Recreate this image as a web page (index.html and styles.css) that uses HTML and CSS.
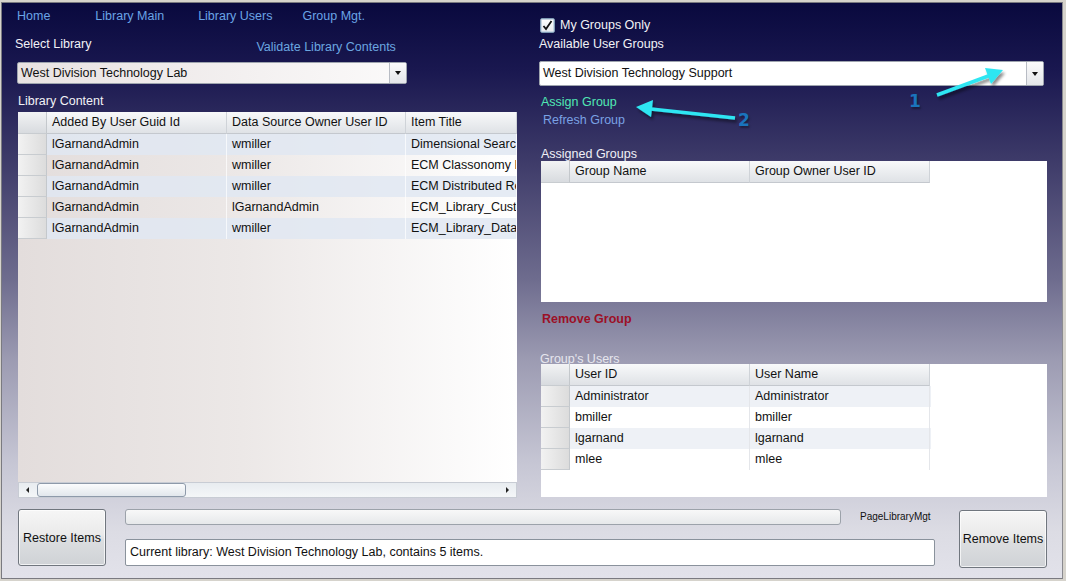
FILE: index.html
```html
<!DOCTYPE html>
<html>
<head>
<meta charset="utf-8">
<title>PageLibraryMgt</title>
<link rel="stylesheet" href="styles.css">
</head>
<body>
<div class="window">
  <div class="app">
    <div class="main">
      <div class="col-left">
        <nav class="nav">
          <a class="nav-link nav-home">Home</a>
          <a class="nav-link nav-main">Library Main</a>
          <a class="nav-link nav-users">Library Users</a>
          <a class="nav-link">Group Mgt.</a>
        </nav>
        <div class="row-select">
          <span class="label">Select Library</span>
          <a class="link validate">Validate Library Contents</a>
        </div>
        <div class="combo combo-left">
          <span class="combo-text">West Division Technology Lab</span>
          <span class="combo-btn"><span class="tri"></span></span>
        </div>
        <div class="label lib-content">Library Content</div>
        <div class="grid grid-left">
          <div class="grow ghead">
            <div class="rh"></div>
            <div class="c c1">Added By User Guid Id</div>
            <div class="c c2">Data Source Owner User ID</div>
            <div class="c c3">Item Title</div>
          </div>
          <div class="grow alt">
            <div class="rh"></div>
            <div class="c c1">lGarnandAdmin</div>
            <div class="c c2">wmiller</div>
            <div class="c c3">Dimensional Search</div>
          </div>
          <div class="grow">
            <div class="rh"></div>
            <div class="c c1">lGarnandAdmin</div>
            <div class="c c2">wmiller</div>
            <div class="c c3">ECM Classonomy Engine</div>
          </div>
          <div class="grow alt">
            <div class="rh"></div>
            <div class="c c1">lGarnandAdmin</div>
            <div class="c c2">wmiller</div>
            <div class="c c3">ECM Distributed Repository</div>
          </div>
          <div class="grow">
            <div class="rh"></div>
            <div class="c c1">lGarnandAdmin</div>
            <div class="c c2">lGarnandAdmin</div>
            <div class="c c3">ECM_Library_Customer</div>
          </div>
          <div class="grow alt">
            <div class="rh"></div>
            <div class="c c1">lGarnandAdmin</div>
            <div class="c c2">wmiller</div>
            <div class="c c3">ECM_Library_Data_Model</div>
          </div>
          <div class="grid-fill"></div>
          <div class="hscroll">
            <span class="sarrow sleft"></span>
            <span class="thumb"></span>
            <span class="sarrow sright"></span>
          </div>
        </div>
      </div>

      <div class="col-right">
        <div class="check-row">
          <span class="checkbox">
            <svg width="11" height="11" viewBox="0 0 11 11"><path d="M1.5 6 L4 9 L9.5 1" fill="none" stroke="#111" stroke-width="1.8"/></svg>
          </span>
          <span class="label">My Groups Only</span>
        </div>
        <div class="label avail">Available User Groups</div>
        <div class="combo combo-right">
          <span class="combo-text">West Division Technology Support</span>
          <span class="combo-btn"><span class="tri"></span></span>
        </div>
        <a class="assign">Assign Group</a>
        <a class="refresh">Refresh Group</a>
        <div class="label assigned">Assigned Groups</div>
        <div class="grid grid-right grid-assigned">
          <div class="grow ghead">
            <div class="rh"></div>
            <div class="c r1">Group Name</div>
            <div class="c r2">Group Owner User ID</div>
          </div>
        </div>
        <a class="remove-group">Remove Group</a>
        <div class="label gusers">Group's Users</div>
        <div class="grid grid-right grid-users">
          <div class="grow ghead">
            <div class="rh"></div>
            <div class="c r1">User ID</div>
            <div class="c r2">User Name</div>
          </div>
          <div class="grow alt">
            <div class="rh"></div>
            <div class="c r1">Administrator</div>
            <div class="c r2">Administrator</div>
          </div>
          <div class="grow">
            <div class="rh"></div>
            <div class="c r1">bmiller</div>
            <div class="c r2">bmiller</div>
          </div>
          <div class="grow alt">
            <div class="rh"></div>
            <div class="c r1">lgarnand</div>
            <div class="c r2">lgarnand</div>
          </div>
          <div class="grow">
            <div class="rh"></div>
            <div class="c r1">mlee</div>
            <div class="c r2">mlee</div>
          </div>
        </div>
      </div>
    </div>

    <div class="bottom">
      <button class="btn btn-restore">Restore Items</button>
      <div class="status">
        <div class="status-top">
          <div class="progress"></div>
          <span class="page-name">PageLibraryMgt</span>
        </div>
        <div class="status-box">Current library: West Division Technology Lab, contains 5 items.</div>
      </div>
      <button class="btn btn-remove">Remove Items</button>
    </div>

    <svg class="annot" width="1066" height="581" viewBox="0 0 1066 581">
      <defs>
        <filter id="sh" x="-20%" y="-20%" width="140%" height="140%">
          <feDropShadow dx="2" dy="3" stdDeviation="1.5" flood-color="#000" flood-opacity="0.45"/>
        </filter>
      </defs>
      <g filter="url(#sh)" fill="#2ee6f2" stroke="#2ee6f2">
        <line x1="936" y1="95" x2="990" y2="75" stroke-width="3.5"/>
        <polygon points="1002,70 984,68 990,84" stroke="none"/>
        <line x1="734" y1="118" x2="650" y2="109" stroke-width="3.5"/>
        <polygon points="635,107 652,100 650,117" stroke="none"/>
      </g>
    </svg>
    <span class="num num1">1</span>
    <span class="num num2">2</span>
  </div>
</div>
</body>
</html>
```

FILE: styles.css
```css
* { box-sizing: border-box; }
html, body { margin: 0; padding: 0; }
body {
  width: 1066px;
  height: 581px;
  overflow: hidden;
  font-family: "Liberation Sans", Arial, sans-serif;
  font-size: 12.5px;
  background: #d4d0c8;
}
a { text-decoration: none; cursor: pointer; }

.window {
  width: 1066px;
  height: 581px;
  border-top: 2px solid #d6d3cc;
  border-left: 1px solid #d6d3cc;
  border-right: 3px solid #d6d3cc;
  border-bottom: 2px solid #d6d3cc;
  background: #d4d0c8;
  padding: 0;
}
.app {
  position: relative;
  width: 100%;
  height: 100%;
  border: 1px solid #7a7a80;
  border-right-color: #8a8a90;
  background: linear-gradient(to bottom, #09093e 0%, #1a1850 12%, #3f3c6a 28%, #6e6c8e 48%, #9c9bb2 62%, #c6c6d4 80%, #dcdce4 92%, #e2e2ea 100%);
  display: flex;
  flex-direction: column;
}

.main {
  display: grid;
  grid-template-columns: 503px 508px;
  column-gap: 21px;
  padding-left: 13px;
  height: 495px;
}

.label { color: #f2f2f6; line-height: 16px; }

/* ---------- left column ---------- */
.col-left { display: flex; flex-direction: column; }
.nav { display: flex; margin-top: 5px; height: 16px; line-height: 16px; padding-left: 2px; }
.nav-link { color: #6aa4e6; }
.nav-home { margin-right: 45px; }
.nav-main { margin-right: 34px; }
.nav-users { margin-right: 30px; }

.row-select {
  display: flex;
  align-items: flex-start;
  margin-top: 12px;
  height: 18px;
}
.validate { color: #6ba7e0; margin-left: 165px; margin-top: 3px; line-height: 16px; }

.combo {
  display: flex;
  align-items: stretch;
  border: 1px solid #9ea4ae;
  border-radius: 2px;
  overflow: hidden;
}
.combo-left {
  margin-top: 8px;
  margin-left: 2px;
  width: 390px;
  height: 22px;
  background: linear-gradient(to right, #e8e2e2, #fbfafa);
}
.combo-text { flex: 1; padding-left: 3px; line-height: 20px; color: #111; }
.combo-btn {
  width: 17px;
  border-left: 1px solid #b8bcc4;
  background: linear-gradient(to bottom, #fbfbfb, #e4e6ea);
  display: flex;
  align-items: center;
  justify-content: center;
}
.tri {
  width: 0; height: 0;
  border-left: 3.5px solid transparent;
  border-right: 3.5px solid transparent;
  border-top: 4px solid #111;
}
.lib-content { margin-top: 9px; margin-left: 3px; }

.grid { display: flex; flex-direction: column; overflow: hidden; }
.grid-left {
  margin-top: 3px;
  margin-left: 3px;
  width: 499px;
  height: 386px;
  background: linear-gradient(to right, #e3dddc 0%, #ece8e7 45%, #ffffff 100%);
}
.grow { display: flex; height: 21px; line-height: 21px; flex: none; }
.grow .c {
  padding-left: 5px;
  white-space: nowrap;
  overflow: hidden;
  color: #111;
  border-right: 1px solid rgba(255,255,255,0.7);
}
.grow.alt { background: rgba(225, 232, 242, 0.85); }
.rh {
  width: 29px;
  flex: none;
  background: linear-gradient(to right, #f2f2f2, #dcdcdc);
  border-right: 1px solid #c4c8cc;
  border-bottom: 1px solid #c8ccd0;
}
.ghead { height: 22px; line-height: 21px; }
.ghead .c {
  background: linear-gradient(to bottom, #f8f9fa, #dfe2e6);
  border-right: 1px solid #cfd3d8;
  border-bottom: 1px solid #c4c8ce;
}
.ghead .rh { background: linear-gradient(to bottom, #f2f3f4, #d8dbdf); }
.c1 { width: 180px; flex: none; }
.c2 { width: 179px; flex: none; }
.c3 { flex: 1; text-overflow: clip; }
.grid-fill { flex: 1; }

.hscroll {
  height: 16px;
  flex: none;
  display: flex;
  align-items: center;
  background: linear-gradient(to bottom, #e8ecf0, #f4f6f8);
  border: 1px solid #c8ccd4;
  position: relative;
}
.sarrow { width: 0; height: 0; position: absolute; top: 4px; }
.sleft { left: 7px; border-top: 3px solid transparent; border-bottom: 3px solid transparent; border-right: 3px solid #222; }
.sright { right: 7px; border-top: 3px solid transparent; border-bottom: 3px solid transparent; border-left: 3px solid #222; }
.thumb {
  position: absolute;
  left: 18px;
  top: 0;
  width: 149px;
  height: 14px;
  border: 1px solid #8e9aaa;
  border-radius: 3px;
  background: linear-gradient(to bottom, #fbfcfd, #e2e7ec);
}

/* ---------- right column ---------- */
.col-right { display: flex; flex-direction: column; }
.check-row { display: flex; align-items: center; margin-top: 14px; height: 16px; margin-left: 1px; }
.checkbox {
  width: 15px; height: 15px;
  border: 1px solid #7e9ab4;
  border-radius: 2px;
  background: linear-gradient(to bottom, #ffffff, #e6eaee);
  display: flex; align-items: center; justify-content: center;
  margin-right: 5px;
  box-shadow: inset 0 0 0 1px #c8d6e4;
}
.avail { margin-top: 3px; margin-left: 0; }
.combo-right {
  margin-top: 9px;
  width: 505px;
  height: 25px;
  background: #ffffff;
}
.combo-right .combo-text { line-height: 23px; }
.assign { color: #50e8b4; margin-top: 8px; margin-left: 2px; line-height: 16px; }
.refresh { color: #7aa2e4; margin-top: 2px; margin-left: 4px; line-height: 16px; }
.assigned { margin-top: 19px; margin-left: 2px; line-height: 14px; color: #f0f0f6; }

.grid-right { width: 506px; margin-left: 2px; background: #ffffff; }
.grid-assigned { height: 141px; margin-top: 0; }
.r1 { width: 180px; flex: none; }
.r2 { width: 180px; flex: none; }
.grid-right .grow .c { border-right: 1px solid #e4e6ea; }
.grid-right .ghead .c { border-right: 1px solid #cfd3d8; }
.grid-right .grow { width: 390px; }
.grid-right .grow.alt { background: #eef1f6; }
.grid-right .grow:not(.alt):not(.ghead) { background: #ffffff; }

.remove-group {
  color: #9c1026;
  font-weight: bold;
  margin-top: 9px;
  margin-left: 3px;
  line-height: 16px;
}
.gusers { margin-top: 25px; margin-left: 1px; color: #e6e6ee; line-height: 14px; }
.grid-users { height: 133px; margin-top: -2px; }

/* ---------- bottom ---------- */
.bottom {
  display: flex;
  align-items: flex-start;
  padding-left: 16px;
  margin-top: 10px;
}
.btn {
  font-family: "Liberation Sans", Arial, sans-serif;
  font-size: 12.5px;
  color: #111;
  border: 1px solid #70767e;
  border-radius: 3px;
  background: linear-gradient(to bottom, #f6f6f6 0%, #eaeaea 45%, #dcdee0 55%, #cfd2d6 100%);
  box-shadow: inset 0 0 0 1px rgba(255,255,255,0.7);
  padding: 0;
}
.btn-restore { width: 88px; height: 57px; margin-top: 1px; }
.btn-remove { width: 88px; height: 58px; margin-left: 24px; margin-top: 2px; }
.status { margin-left: 19px; width: 810px; display: flex; flex-direction: column; }
.status-top { display: flex; align-items: center; height: 17px; }
.progress {
  width: 716px;
  height: 16px;
  border: 1px solid #9ca2aa;
  border-radius: 3px;
  background: linear-gradient(to bottom, #f8f8f8, #e6e8ea);
}
.page-name { font-size: 10px; color: #111; margin-left: 19px; }
.status-box {
  margin-top: 14px;
  height: 27px;
  border: 1px solid #8a929c;
  border-radius: 2px;
  background: #ffffff;
  line-height: 25px;
  padding-left: 4px;
  color: #111;
}

/* ---------- annotations ---------- */
.annot { position: absolute; left: -1px; top: -3px; pointer-events: none; }
.num {
  position: absolute;
  font-family: "DejaVu Sans", sans-serif;
  font-weight: bold;
  font-size: 17px;
  color: #1a74bc;
  text-shadow: 1px 2px 2px rgba(0,0,0,0.35);
}
.num1 { left: 907px; top: 88px; }
.num2 { left: 736px; top: 107px; }
```
